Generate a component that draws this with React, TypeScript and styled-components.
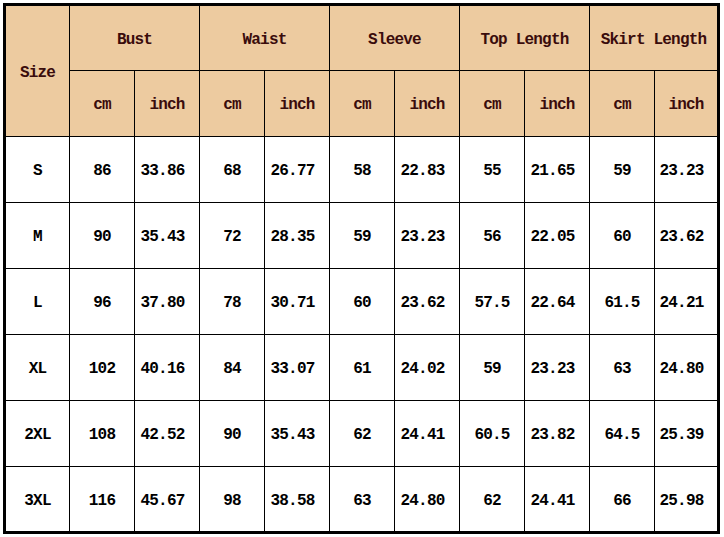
import React from "react";
import styled, { createGlobalStyle } from "styled-components";

const Global = createGlobalStyle`
  html, body {
    margin: 0;
    padding: 0;
    background: #ffffff;
  }
  body {
    font-family: "Liberation Mono", "DejaVu Sans Mono", monospace;
  }
`;

const Page = styled.div`
  padding: 3px;
`;

const Chart = styled.div`
  display: grid;
  width: max-content;
  grid-template-columns: 63px repeat(9, 64px) 62px;
  grid-template-rows: 64px 65px repeat(5, 65px) 64px;
  gap: 1px;
  background: #000000;
  border: 3px solid #000000;
`;

const Cell = styled.div<{ $head?: boolean; $span?: number; $rows?: number; $dec?: boolean }>`
  display: flex;
  align-items: center;
  justify-content: center;
  background: ${(p) => (p.$head ? "#edcba0" : "#ffffff")};
  color: ${(p) => (p.$head ? "#3a0c0c" : "#000000")};
  font-family: "Liberation Mono", "DejaVu Sans Mono", monospace;
  font-weight: 700;
  font-size: 16px;
  letter-spacing: -0.8px;
  white-space: pre;
  grid-column: span ${(p) => p.$span ?? 1};
  grid-row: span ${(p) => p.$rows ?? 1};
  padding-top: 3px;
  padding-right: ${(p) => (p.$dec ? "9px" : "0")};
`;

const groups = ["Bust", "Waist", "Sleeve", "Top Length", "Skirt Length"];

const rows: string[][] = [
  ["S", "86", "33.86", "68", "26.77", "58", "22.83", "55", "21.65", "59", "23.23"],
  ["M", "90", "35.43", "72", "28.35", "59", "23.23", "56", "22.05", "60", "23.62"],
  ["L", "96", "37.80", "78", "30.71", "60", "23.62", "57.5", "22.64", "61.5", "24.21"],
  ["XL", "102", "40.16", "84", "33.07", "61", "24.02", "59", "23.23", "63", "24.80"],
  ["2XL", "108", "42.52", "90", "35.43", "62", "24.41", "60.5", "23.82", "64.5", "25.39"],
  ["3XL", "116", "45.67", "98", "38.58", "63", "24.80", "62", "24.41", "66", "25.98"],
];

export default function App() {
  return (
    <Page>
      <Global />
      <Chart>
        <Cell $head $rows={2}>Size</Cell>
        {groups.map((g) => (
          <Cell key={g} $head $span={2}>
            {g}
          </Cell>
        ))}
        {groups.map((g) => (
          <React.Fragment key={g + "-u"}>
            <Cell $head>cm</Cell>
            <Cell $head>inch</Cell>
          </React.Fragment>
        ))}
        {rows.map((r) =>
          r.map((v, i) => (
            <Cell key={r[0] + i} $dec={i > 0 && i % 2 === 0}>
              {v}
            </Cell>
          ))
        )}
      </Chart>
    </Page>
  );
}
